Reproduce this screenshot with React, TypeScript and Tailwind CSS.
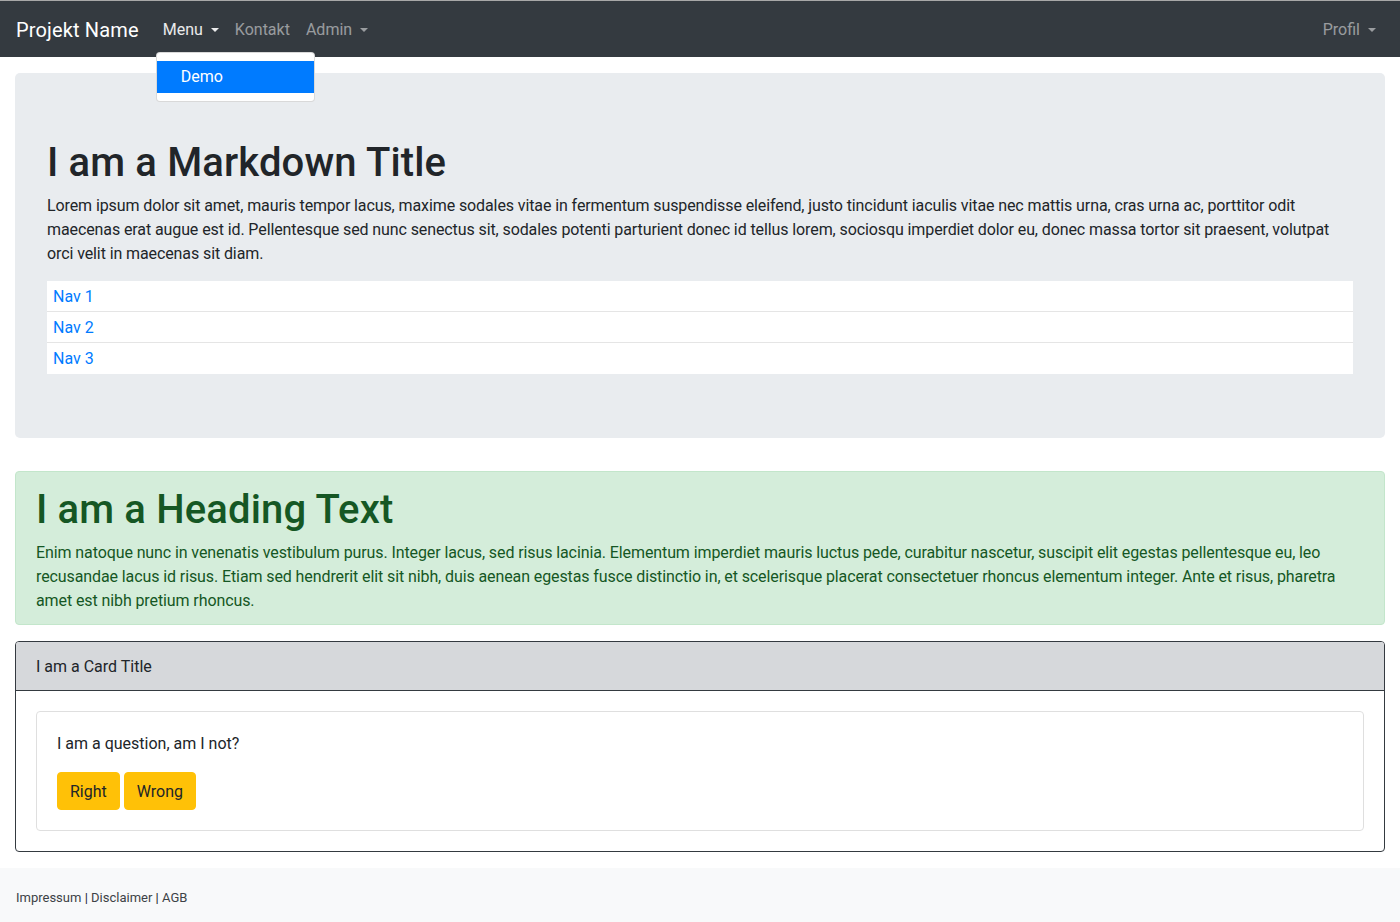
import React from "react";

function Caret() {
  return (
    <span className="inline-block w-0 h-0 ml-[8px] align-[3px] border-t-[4.8px] border-t-current border-x-[4.5px] border-x-transparent" />
  );
}

export default function App() {
  return (
    <div className="min-h-[922px] bg-white text-[#212529] text-base leading-6" style={{ fontFamily: "Roboto, 'Liberation Sans', sans-serif" }}>
      <div className="h-px bg-[#a8a8a8]" />
      <nav className="h-[56px] bg-[#343a40] px-4 pt-[2px] flex items-center">
        <span className="text-[20px] leading-[30px] tracking-[0.15px] text-white mr-4">Projekt Name</span>
        <div className="flex items-center">
          <div className="relative">
            <span className="block px-2 py-2 text-white/90">
              Menu
              <Caret />
            </span>
            <div className="absolute left-px top-[calc(100%+2px)] w-[159px] bg-white border border-black/15 rounded py-2 z-10">
              <div className="px-6 py-1 bg-[#007bff] text-white">Demo</div>
            </div>
          </div>
          <span className="block px-2 py-2 text-white/50">Kontakt</span>
          <span className="block px-2 py-2 text-white/50">
            Admin
            <Caret />
          </span>
        </div>
        <div className="ml-auto">
          <span className="block px-2 py-2 text-white/50">
            Profil
            <Caret />
          </span>
        </div>
      </nav>

      <main className="px-[15px] pt-4">
        <section className="bg-[#e9ecef] rounded-[5px] px-8 py-16 mb-[33px]">
          <h1 className="text-[40px] leading-[44px] pt-[4px] font-medium tracking-[0.15px] mb-2">I am a Markdown Title</h1>
          <p className="pt-px mb-[15px] tracking-[-0.1px]">
            Lorem ipsum dolor sit amet, mauris tempor lacus, maxime sodales vitae in fermentum suspendisse eleifend, justo tincidunt iaculis vitae nec mattis urna, cras urna ac, porttitor odit maecenas erat augue est id. Pellentesque sed nunc senectus sit, sodales potenti parturient donec id tellus lorem, sociosqu imperdiet dolor eu, donec massa tortor sit praesent, volutpat orci velit in maecenas sit diam.
          </p>
          <div className="bg-white">
            <div className="px-[6px] pt-[4px] pb-[2px] border-b border-[#e5e5e5] text-[#007bff]">Nav 1</div>
            <div className="px-[6px] pt-[4px] pb-[2px] border-b border-[#e5e5e5] text-[#007bff]">Nav 2</div>
            <div className="px-[6px] pt-[4px] pb-[2px] border-b border-transparent text-[#007bff]">Nav 3</div>
          </div>
        </section>

        <section className="bg-[#d4edda] border border-[#c3e6cb] rounded text-[#155724] px-5 pt-3 pb-[11px] mb-4">
          <h1 className="text-[40px] leading-[44px] pt-[4px] font-medium tracking-[0.15px] mb-2">I am a Heading Text</h1>
          <p className="pt-px tracking-[-0.1px]">
            Enim natoque nunc in venenatis vestibulum purus. Integer lacus, sed risus lacinia. Elementum imperdiet mauris luctus pede, curabitur nascetur, suscipit elit egestas pellentesque eu, leo recusandae lacus id risus. Etiam sed hendrerit elit sit nibh, duis aenean egestas fusce distinctio in, et scelerisque placerat consectetuer rhoncus elementum integer. Ante et risus, pharetra amet est nibh pretium rhoncus.
          </p>
        </section>

        <section className="border border-[#343a40] rounded mb-4 overflow-hidden">
          <div className="bg-[#d6d8db] border-b border-[#343a40] px-5 pt-[13px] pb-[11px]">I am a Card Title</div>
          <div className="p-5">
            <div className="border border-[#dfdfdf] rounded p-5">
              <p className="mb-4 pt-px -mt-px">I am a question, am I not?</p>
              <div className="flex gap-1">
                <button className="bg-[#ffc107] border border-[#ffc107] rounded px-3 pt-[7px] pb-[5px] text-[#212529] leading-6">Right</button>
                <button className="bg-[#ffc107] border border-[#ffc107] rounded px-3 pt-[7px] pb-[5px] text-[#212529] leading-6">Wrong</button>
              </div>
            </div>
          </div>
        </section>
      </main>

      <footer className="bg-[#f8f9fa] px-4 pt-[18px] pb-4 text-[13px] leading-6 text-[#3d4246]">
        Impressum <span className="text-[#212529]">|</span> Disclaimer <span className="text-[#212529]">|</span> AGB
      </footer>
    </div>
  );
}
